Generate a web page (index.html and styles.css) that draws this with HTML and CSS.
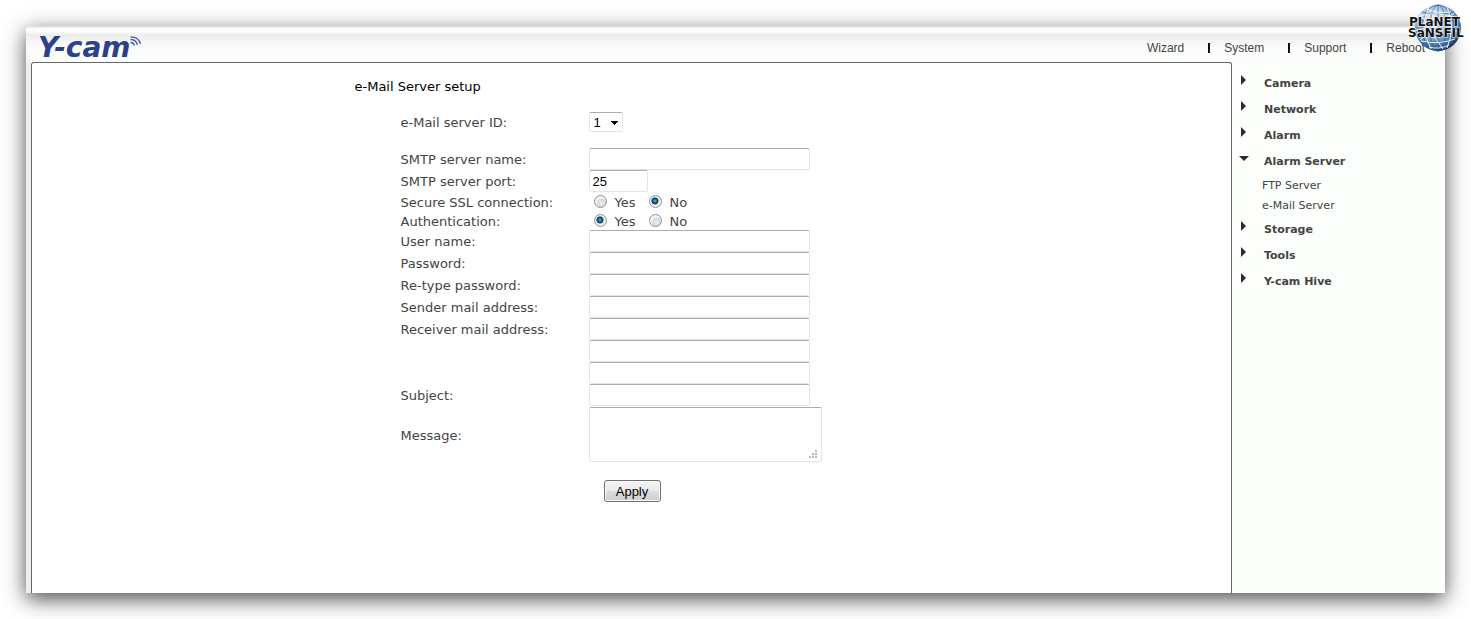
FILE: index.html
```html
<!DOCTYPE html>
<html lang="en">
<head>
    <meta charset="UTF-8">
    <meta name="viewport" content="width=device-width, initial-scale=1.0">
    <title>Y-cam - e-Mail Server setup</title>
    <link rel="stylesheet" href="styles.css">
</head>
<body>
    <div class="window">
        <header class="header">
            <a class="logo" href="#">
                <span>Y-cam</span>
                <svg class="logo-waves" width="12" height="12" viewBox="0 0 12 12" fill="none" stroke="#4a5fa8" stroke-width="1.3">
                    <path d="M0.5 6.5 Q3.5 6.5 4.5 9.5"/>
                    <path d="M0.5 3.5 Q6 3.5 7.5 9"/>
                    <path d="M0.5 0.8 Q9 1 10.5 8"/>
                </svg>
            </a>
            <nav class="top-nav">
                <a href="#">Wizard</a>
                <a href="#">System</a>
                <a href="#">Support</a>
                <a href="#">Reboot</a>
            </nav>
        </header>

        <div class="main">
            <main class="content">
                <form class="setup-form">
                    <h1>e-Mail Server setup</h1>

                    <div class="row row-id">
                        <label for="serverId">e-Mail server ID:</label>
                        <select id="serverId">
                            <option>1</option>
                            <option>2</option>
                        </select>
                    </div>
                    <div class="row">
                        <label for="smtpName">SMTP server name:</label>
                        <input type="text" id="smtpName">
                    </div>
                    <div class="row">
                        <label for="smtpPort">SMTP server port:</label>
                        <input type="text" id="smtpPort" class="short" value="25">
                    </div>
                    <div class="row row-radio" role="radiogroup" aria-labelledby="sslLabel">
                        <span class="row-label" id="sslLabel">Secure SSL connection:</span>
                        <label class="choice"><input type="radio" name="ssl" value="yes">Yes</label>
                        <label class="choice"><input type="radio" name="ssl" value="no" checked>No</label>
                    </div>
                    <div class="row row-radio" role="radiogroup" aria-labelledby="authLabel">
                        <span class="row-label" id="authLabel">Authentication:</span>
                        <label class="choice"><input type="radio" name="auth" value="yes" checked>Yes</label>
                        <label class="choice"><input type="radio" name="auth" value="no">No</label>
                    </div>
                    <div class="row">
                        <label for="userName">User name:</label>
                        <input type="text" id="userName">
                    </div>
                    <div class="row">
                        <label for="password">Password:</label>
                        <input type="password" id="password">
                    </div>
                    <div class="row">
                        <label for="password2">Re-type password:</label>
                        <input type="password" id="password2">
                    </div>
                    <div class="row">
                        <label for="sender">Sender mail address:</label>
                        <input type="text" id="sender">
                    </div>
                    <div class="row">
                        <label for="receiver1" id="receiverLabel">Receiver mail address:</label>
                        <div class="stack">
                            <input type="text" id="receiver1">
                            <input type="text" aria-labelledby="receiverLabel">
                            <input type="text" aria-labelledby="receiverLabel">
                        </div>
                    </div>
                    <div class="row">
                        <label for="subject">Subject:</label>
                        <input type="text" id="subject">
                    </div>
                    <div class="row row-message">
                        <label for="message">Message:</label>
                        <div class="message-box">
                            <textarea id="message"></textarea>
                            <svg class="grip" width="8" height="8" viewBox="0 0 8 8" fill="#b8b8b8">
                                <path d="M6 0h2v2h-2zM3 3h2v2h-2zM6 3h2v2h-2zM0 6h2v2h-2zM3 6h2v2h-2zM6 6h2v2h-2z"/>
                            </svg>
                        </div>
                    </div>
                    <button type="button" class="apply">Apply</button>
                </form>
            </main>

            <nav class="sidebar">
                <a class="menu" href="#">Camera</a>
                <a class="menu" href="#">Network</a>
                <a class="menu" href="#">Alarm</a>
                <a class="menu open" href="#">Alarm Server</a>
                <div class="submenu">
                    <a href="#">FTP Server</a>
                    <a href="#">e-Mail Server</a>
                </div>
                <a class="menu" href="#">Storage</a>
                <a class="menu" href="#">Tools</a>
                <a class="menu" href="#">Y-cam Hive</a>
            </nav>
        </div>
    </div>

    <!-- reseller badge -->
    <svg class="badge" width="60" height="52" viewBox="0 0 60 52">
        <defs>
            <radialGradient id="globe" cx="40%" cy="32%" r="70%">
                <stop offset="0" stop-color="#f4f9ff"/>
                <stop offset="0.45" stop-color="#a9c3de"/>
                <stop offset="0.8" stop-color="#4a77ad"/>
                <stop offset="1" stop-color="#142d58"/>
            </radialGradient>
        </defs>
        <circle cx="31" cy="28" r="23" fill="url(#globe)"/>
        <g fill="none" stroke="#2d568c" stroke-width="0.7">
            <ellipse cx="31" cy="28" rx="8" ry="23"/>
            <ellipse cx="31" cy="28" rx="16" ry="23"/>
            <path d="M31 5v46M8 28h46M10 19q21 6 42 0M15 12q16 5 32 0M10 37q21 -5 42 0M15 44q16 -5 32 0"/>
        </g>
        <g fill="none" stroke="#e8f2fc" stroke-width="1">
            <path d="M12 16q18 -5 39 2M20 9q12 5 24 3M9 30q20 -6 44 2M14 41q18 4 34 -2M22 47q10 3 20 -2"/>
            <path d="M22 7q-10 20 2 42M40 7q9 20 0 41M14 14q8 16 22 35M47 13q-16 12 -34 27"/>
        </g>
        <g class="badge-text">
            <text x="2" y="26">PLaNET</text>
            <text x="1" y="37">SaNSFIL</text>
        </g>
    </svg>
</body>
</html>
```
FILE: styles.css
```css
* {
    box-sizing: border-box;
}
body {
    margin: 0;
    padding: 26px;
    background-color: #fff;
    font-family: Verdana, "DejaVu Sans", sans-serif;
    font-size: 13px;
    color: #444;
}
a {
    color: #444;
    text-decoration: none;
}
.window {
    display: flex;
    flex-direction: column;
    min-height: calc(100vh - 52px);
    padding-left: 5px;
    background: linear-gradient(#ddd 0, #fff 3px, #fafafa 6px, #ececec 9px, #f4f4f4 14px, #fbfdfb 24px, rgba(251, 253, 251, 0) 40px),
        linear-gradient(to right, #eee 5px, #fbfefb 5px);
    box-shadow: 0 6px 20px rgba(0, 0, 0, 0.7);
}

/* header */
.header {
    display: flex;
    justify-content: space-between;
    align-items: center;
    height: 36px;
    padding: 8px 20px 0 7px;
}
.logo {
    display: flex;
    align-items: flex-start;
    font-size: 28px;
    line-height: 28px;
    font-weight: bold;
    font-style: italic;
    color: #2b4189;
}
.logo-waves {
    margin-top: 2px;
}
.top-nav {
    display: flex;
    font-family: Arial, "Liberation Sans", sans-serif;
    font-size: 12px;
    line-height: 14px;
}
.top-nav a {
    display: flex;
    align-items: center;
}
.top-nav a + a::before {
    content: "";
    width: 2px;
    height: 10px;
    margin: 0 14px 0 24px;
    background-color: #111;
}

/* columns */
.main {
    display: flex;
    flex: 1;
}
.content {
    flex: 1;
    background-color: #fff;
    border: 1px solid #666;
    border-bottom: none;
    border-radius: 3px 3px 0 0;
}
.sidebar {
    width: 213px;
    padding: 8px 0 0 9px;
    font-size: 11px;
}

/* form */
.setup-form {
    max-width: 554px;
    margin: 0 auto;
    padding: 15px 0 20px;
}
.setup-form h1 {
    margin: 0 0 17px;
    font-size: 13px;
    line-height: 17px;
    font-weight: normal;
    color: #000;
}
.row {
    display: flex;
    align-items: flex-start;
    padding-left: 46px;
    line-height: 20px;
}
.row > label:first-child,
.row-label {
    width: 188px;
    padding-top: 2px;
}
.row-id {
    margin-bottom: 16px;
    line-height: 18px;
}
.row-radio {
    line-height: 17px;
}
.row-message {
    align-items: center;
    margin: 1px 0 18px;
}
.setup-form input[type="text"],
.setup-form input[type="password"],
.setup-form textarea,
.setup-form select {
    display: block;
    margin: 0;
    border: 1px solid #e3e3eb;
    border-top-color: #abadb3;
    border-radius: 2px;
    background-color: #fff;
    font-family: Arial, "Liberation Sans", sans-serif;
    font-size: 13px;
    color: #000;
}
.setup-form input[type="text"],
.setup-form input[type="password"] {
    width: 221px;
    height: 22px;
    padding: 1px 3px;
}
.setup-form input.short {
    width: 59px;
}
.setup-form select {
    appearance: none;
    width: 34px;
    height: 20px;
    padding: 0 4px;
    background: linear-gradient(to bottom right, #000 50%, transparent 50%) 25px 8px / 4px 4px no-repeat,
        linear-gradient(to bottom left, #000 50%, transparent 50%) 21px 8px / 4px 4px no-repeat,
        #fff;
}
.setup-form textarea {
    width: 233px;
    height: 55px;
    resize: none;
}
.message-box {
    position: relative;
}
.grip {
    position: absolute;
    right: 5px;
    bottom: 4px;
}
.choice {
    display: flex;
    align-items: center;
    width: 50px;
    margin-right: 5px;
    padding-top: 3px;
    line-height: 16px;
}
.choice input {
    appearance: none;
    width: 13px;
    height: 13px;
    margin: 0 8px 3px 5px;
    border: 1px solid #8e8f8f;
    border-radius: 50%;
    background: radial-gradient(circle at 60% 65%, #f0f0f0 0, #d4d7d9 4px, #f4f4f4 5px);
}
.choice input:checked {
    background: radial-gradient(circle at 45% 45%, #8fdcf5 0, #1f7fae 1px, #0d3e5e 3px, #f0f0f0 4px);
}
.apply {
    display: block;
    width: 57px;
    height: 22px;
    margin-left: 249px;
    padding: 0;
    border: 1px solid #707070;
    border-radius: 3px;
    background: linear-gradient(#f2f2f2, #ebebeb 50%, #ddd 50%, #cfcfcf);
    box-shadow: inset 0 0 0 1px #fafafa;
    font-family: Arial, "Liberation Sans", sans-serif;
    font-size: 13px;
    color: #000;
}

/* side menu */
.menu {
    display: flex;
    padding-top: 2px;
    line-height: 24px;
    font-weight: bold;
}
.menu::before {
    content: "";
    width: 5px;
    height: 10px;
    margin: 3px 18px 0 0;
    background-color: #2b2b2b;
    clip-path: polygon(0 0, 100% 50%, 0 100%);
}
.menu.open::before {
    width: 10px;
    height: 5px;
    margin: 6px 15px 0 -2px;
    clip-path: polygon(0 0, 100% 0, 50% 100%);
}
.submenu {
    padding: 1px 0 1px 21px;
}
.submenu a {
    display: block;
    padding-top: 2px;
    line-height: 18px;
}

.badge {
    position: absolute;
    top: 0;
    right: 4px;
}
.badge-text {
    font-family: "DejaVu Sans", sans-serif;
    font-size: 12px;
    font-weight: bold;
    fill: #111;
    stroke: #fff;
    stroke-width: 1px;
    paint-order: stroke;
}
```
